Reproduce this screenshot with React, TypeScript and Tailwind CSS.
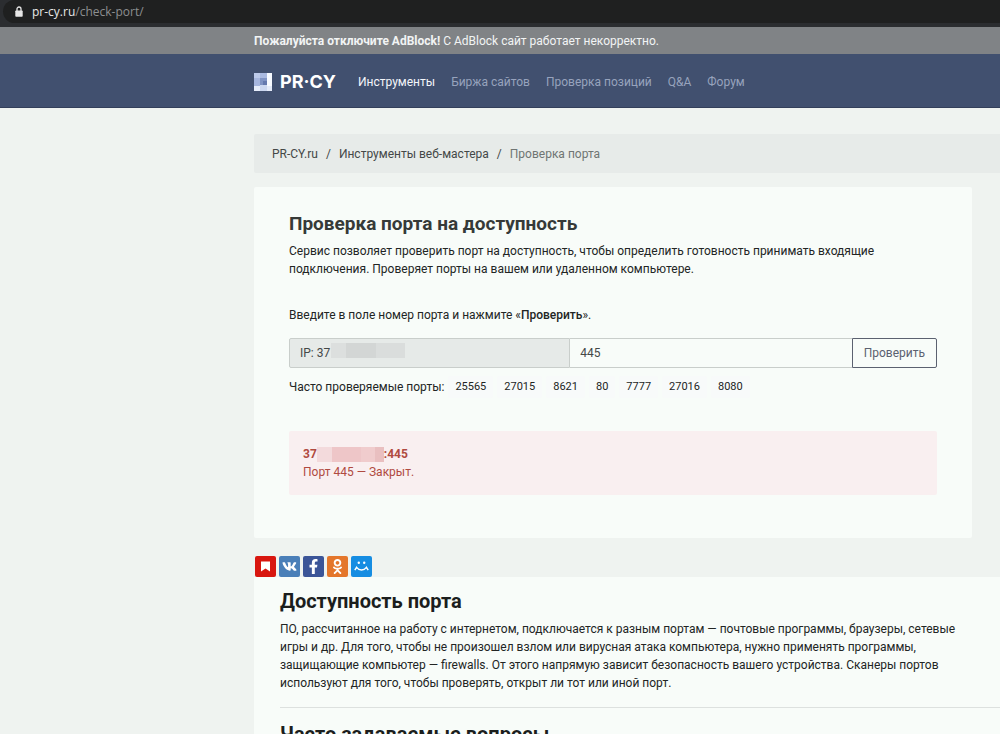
import { useState } from "react";
import { FaFacebookF, FaOdnoklassniki, FaVk } from "react-icons/fa";

const navItems = ["Инструменты", "Биржа сайтов", "Проверка позиций", "Q&A", "Форум"];

const commonPorts = ["25565", "27015", "8621", "80", "7777", "27016", "8080"];

function AddressBar() {
  return (
    <div className="h-[27px] bg-[#2b2d30] pl-[3px] pb-1">
      <div className="h-full rounded-l-full bg-[#1f2020] flex items-center pl-3 gap-[9px]">
        <svg viewBox="0 0 8 11" className="w-2 h-[11px]" aria-hidden="true">
          <path d="M2 5V3a2 2 0 0 1 4 0v2" fill="none" stroke="#e6e6e6" strokeWidth="1.3" />
          <rect x="0.3" y="4.5" width="7.4" height="6.2" rx="0.8" fill="#e6e6e6" />
        </svg>
        <span className="font-['Open_Sans',sans-serif] text-xs text-[#8d8f90]">
          <span className="text-[#e8e8e8]">pr-cy.ru</span>/check-port/
        </span>
      </div>
    </div>
  );
}

function Logo() {
  return (
    <a href="#" className="flex items-center gap-2 text-white">
      <svg viewBox="0 0 18 18" className="w-[18px] h-[18px]" aria-hidden="true">
        <rect width="18" height="18" fill="#b9c7e8" />
        <path d="M0 0h6v6H0z" fill="#bccaea" />
        <path d="M6 0h7v5H6z" fill="#a9b9e0" />
        <path d="M13 0h5v13h-5z" fill="#f7faff" />
        <path d="M0 5h6v8H0z" fill="#a6b6de" />
        <path d="M6 5h7v7H6z" fill="#7f93c3" />
        <path d="M9 8h4v4H9z" fill="#6479ae" />
        <path d="M0 13h6v5H0z" fill="#e6edfa" />
        <path d="M6 12h7v6H6z" fill="#cbd7f0" />
        <path d="M13 13h5v5h-5z" fill="#e3eaf8" />
      </svg>
      <span className="font-['Inter',sans-serif] text-lg leading-6 font-bold">PR·CY</span>
    </a>
  );
}

function Header() {
  return (
    <header>
      <div className="h-[27px] bg-[#808386] pl-[254px] flex items-center text-[#f2f4f4]">
        <p>
          <b>Пожалуйста отключите AdBlock!</b> С AdBlock сайт работает некорректно.
        </p>
      </div>
      <nav className="h-[54px] bg-[#41506f] border-b border-[#333f5a] pt-[2px] pl-[254px] flex items-center gap-[22px]">
        <Logo />
        <div className="flex items-center gap-4">
          {navItems.map((item, i) => (
            <a key={item} href="#" className={i === 0 ? "text-[#f4f6fa]" : "text-[#97a3bd]"}>
              {item}
            </a>
          ))}
        </div>
      </nav>
    </header>
  );
}

function Breadcrumbs() {
  return (
    <nav className="h-[39px] bg-[#e7ebe9] rounded-l-xs pl-[18px] flex items-center gap-2 text-[#444847]">
      <a href="#">PR-CY.ru</a>
      <span>/</span>
      <a href="#">Инструменты веб-мастера</a>
      <span>/</span>
      <span className="text-[#6f7573]">Проверка порта</span>
    </nav>
  );
}

function PortForm() {
  const [port, setPort] = useState("445");

  return (
    <form onSubmit={e => e.preventDefault()}>
      <div className="grid grid-cols-[1fr_1fr_auto] h-[30px]">
        <div className="relative">
          <input
            aria-label="IP"
            className="w-full h-full bg-[#e6eae8] border border-[#c9cecb] rounded-l-xs px-[10px] text-[#444847]"
            value="IP: 37"
            readOnly
          />
          <div className="absolute left-[42px] top-[5px] h-[15px] flex">
            <span className="w-[15px] bg-[#dcdfde]"></span>
            <span className="w-[30px] bg-[#d3d6d5]"></span>
            <span className="w-[29px] bg-[#dadddc]"></span>
          </div>
        </div>
        <input
          aria-label="Порт"
          className="min-w-0 border-y border-[#c9cecb] px-[10px] text-[#444847]"
          value={port}
          onChange={e => setPort(e.target.value)}
        />
        <button className="px-[11px] border border-[#5b6170] rounded-r-xs text-[#5b6170]">
          Проверить
        </button>
      </div>
      <div className="mt-2 flex items-center h-[22px]">
        <span className="mr-1">Часто проверяемые порты:</span>
        <div className="flex gap-1">
          {commonPorts.map(p => (
            <button
              key={p}
              type="button"
              className="bg-[#f8fafa] rounded-xs px-[7px] h-[22px] text-[11px]"
              onClick={() => setPort(p)}
            >
              {p}
            </button>
          ))}
        </div>
      </div>
    </form>
  );
}

function Result() {
  return (
    <div className="mt-[33px] h-16 bg-[#f9eff0] rounded-xs px-[14px] py-[14px] leading-[18px] text-[#b04a40]">
      <div className="flex items-center font-bold">
        37
        <span className="flex h-[15px]">
          <span className="w-[15px] bg-[#f3dadc]"></span>
          <span className="w-[29px] bg-[#eec6c8]"></span>
          <span className="w-[14px] bg-[#f0cccd]"></span>
          <span className="w-[9px] bg-[#e9bfc0]"></span>
        </span>
        :445
      </div>
      <p>Порт 445 — Закрыт.</p>
    </div>
  );
}

function ShareButtons() {
  return (
    <div className="mt-[18px] pl-px flex gap-[3px] text-white">
      <a href="#" aria-label="Закладки" className="w-[21px] h-[21px] rounded-xs bg-[#d8160f] flex items-center justify-center">
        <svg viewBox="0 0 9 11" className="w-[9px] h-[11px]">
          <path d="M0 0.5h9v10L4.5 7.5 0 10.5z" fill="currentColor" />
        </svg>
      </a>
      <a href="#" aria-label="ВКонтакте" className="w-[21px] h-[21px] rounded-xs bg-[#4a7fb8] flex items-center justify-center">
        <FaVk size={15} />
      </a>
      <a href="#" aria-label="Facebook" className="w-[21px] h-[21px] rounded-xs bg-[#3b5598] flex items-center justify-center">
        <FaFacebookF size={15} />
      </a>
      <a href="#" aria-label="Одноклассники" className="w-[21px] h-[21px] rounded-xs bg-[#e4762b] flex items-center justify-center">
        <FaOdnoklassniki size={15} />
      </a>
      <a href="#" aria-label="Мой Мир" className="w-[21px] h-[21px] rounded-xs bg-[#168de2] flex items-center justify-center">
        <svg viewBox="0 0 15 11" className="w-[15px] h-[11px]">
          <circle cx="4.8" cy="1.8" r="1.2" fill="currentColor" />
          <circle cx="10.2" cy="1.8" r="1.2" fill="currentColor" />
          <path
            d="M0.8 9.2L2.6 6.4C5 9.8 10 9.8 12.4 6.4L14.2 9.2"
            fill="none"
            stroke="currentColor"
            strokeWidth="1.5"
          />
        </svg>
      </a>
    </div>
  );
}

export default function App() {
  return (
    <div className="h-screen overflow-hidden bg-[#eff3f0] font-['Roboto',sans-serif] text-xs leading-[18px] text-[#222524]">
      <AddressBar />
      <Header />

      <main className="pl-[254px] pt-[26px]">
        <Breadcrumbs />

        <section className="mt-[14px] mr-7 bg-[#f8fcf9] rounded-xs px-[35px] pt-[25px] pb-[43px]">
          <h1 className="text-[19px] leading-6 font-bold text-[#363a38]">Проверка порта на доступность</h1>
          <p className="mt-[6px]">
            Сервис позволяет проверить порт на доступность, чтобы определить готовность принимать входящие
            подключения. Проверяет порты на вашем или удаленном компьютере.
          </p>
          <p className="mt-7 mb-[14px]">
            Введите в поле номер порта и нажмите «<span className="font-medium">Проверить</span>».
          </p>
          <PortForm />
          <Result />
        </section>

        <ShareButtons />

        <section className="bg-[#f8fcf9] pl-[26px] pt-3">
          <h2 className="text-xl leading-6 font-bold text-[#1b1e1d]">Доступность порта</h2>
          <p className="mt-[7px] mr-7">
            ПО, рассчитанное на работу с интернетом, подключается к разным портам — почтовые программы, браузеры, сетевые
            игры и др. Для того, чтобы не произошел взлом или вирусная атака компьютера, нужно применять программы,
            защищающие компьютер — firewalls. От этого напрямую зависит безопасность вашего устройства. Сканеры портов
            используют для того, чтобы проверять, открыт ли тот или иной порт.
          </p>
          <hr className="mt-[15px] border-[#dde1df]" />
          <h2 className="mt-[14px] pb-8 text-xl leading-6 font-bold text-[#1b1e1d]">Часто задаваемые вопросы</h2>
        </section>
      </main>
    </div>
  );
}
